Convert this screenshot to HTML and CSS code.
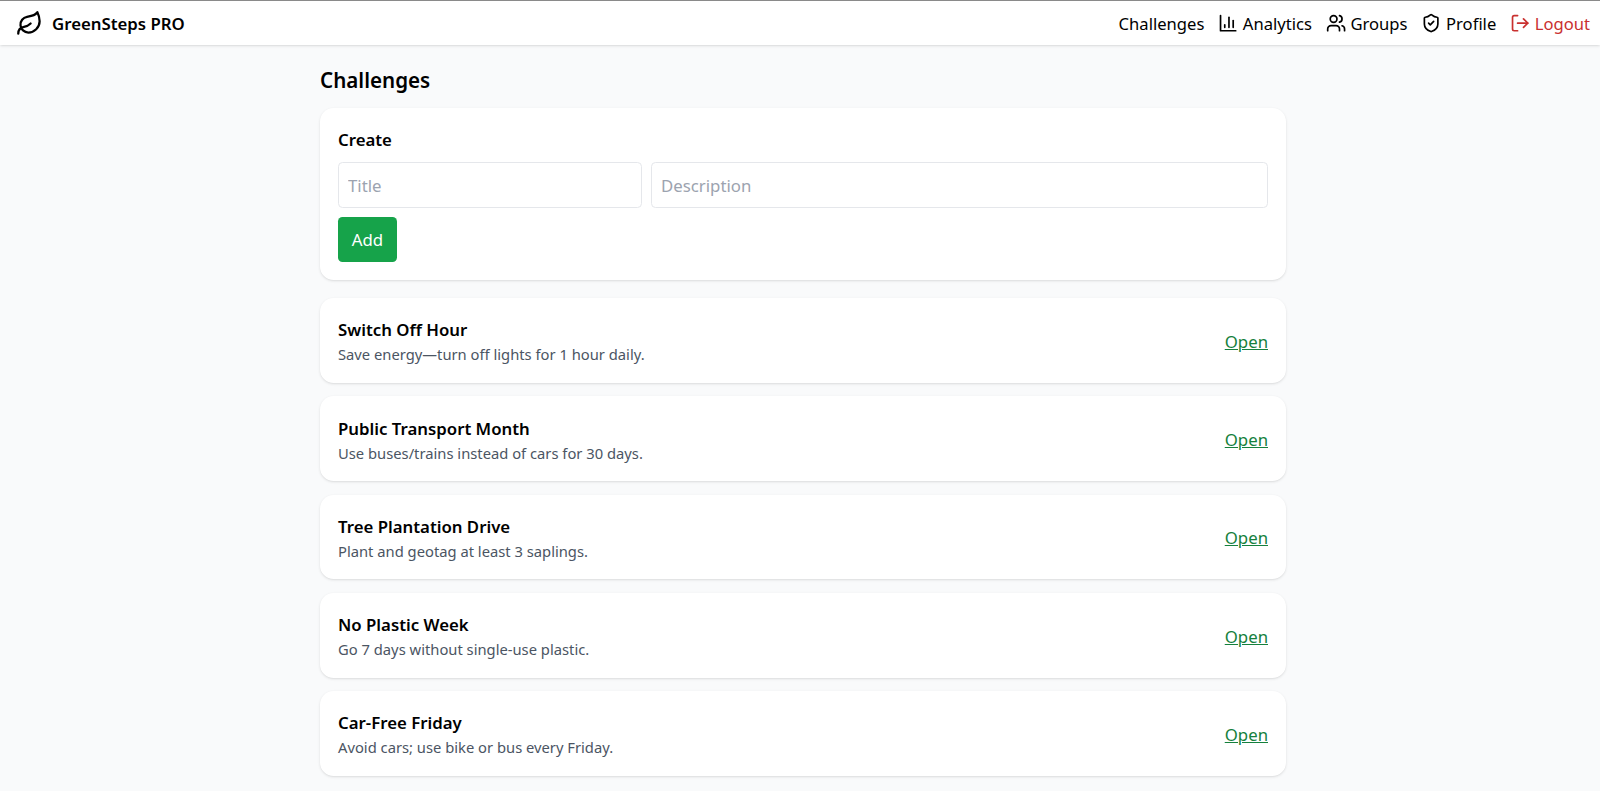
FILE: index.html
```html
<!DOCTYPE html>
<html lang="en">
<head>
    <meta charset="UTF-8">
    <meta name="viewport" content="width=device-width, initial-scale=1.0">
    <title>GreenSteps PRO</title>
    <link rel="stylesheet" href="styles.css">
</head>
<body>
    <nav class="topbar">
        <a class="brand" href="#">
            <svg class="icon brand-icon" viewBox="0 0 24 24"><path d="M11 20A7 7 0 0 1 9.8 6.1C15.5 5 17 4.48 19 2c1 2 2 4.18 2 8 0 5.5-4.78 10-10 10Z"/><path d="M2 21c0-3 1.85-5.36 5.08-6C9.5 14.52 12 13 13 12"/></svg>
            <span>GreenSteps PRO</span>
        </a>
        <div class="nav-links">
            <a href="#">Challenges</a>
            <a href="#"><svg class="icon" viewBox="0 0 24 24"><path d="M3 3v18h18"/><path d="M18 17V9"/><path d="M13 17V5"/><path d="M8 17v-3"/></svg>Analytics</a>
            <a href="#"><svg class="icon" viewBox="0 0 24 24"><path d="M16 21v-2a4 4 0 0 0-4-4H6a4 4 0 0 0-4 4v2"/><circle cx="9" cy="7" r="4"/><path d="M22 21v-2a4 4 0 0 0-3-3.87"/><path d="M16 3.13a4 4 0 0 1 0 7.75"/></svg>Groups</a>
            <a href="#"><svg class="icon" viewBox="0 0 24 24"><path d="M20 13c0 5-3.5 7.5-7.66 8.95a1 1 0 0 1-.67-.01C7.5 20.5 4 18 4 13V6a1 1 0 0 1 1-1c2 0 4.5-1.2 6.24-2.72a1.17 1.17 0 0 1 1.52 0C14.51 3.81 17 5 19 5a1 1 0 0 1 1 1z"/><path d="m9 12 2 2 4-4"/></svg>Profile</a>
            <a class="logout" href="#"><svg class="icon" viewBox="0 0 24 24"><path d="M9 21H5a2 2 0 0 1-2-2V5a2 2 0 0 1 2-2h4"/><path d="m16 17 5-5-5-5"/><path d="M21 12H9"/></svg>Logout</a>
        </div>
    </nav>

    <main class="page">
        <h1 class="page-title">Challenges</h1>

        <section class="card create">
            <h2 class="card-title">Create</h2>
            <div class="fields">
                <input class="field field-title" placeholder="Title">
                <input class="field field-desc" placeholder="Description">
            </div>
            <button class="add-btn">Add</button>
        </section>

        <section class="card row">
            <div>
                <h2 class="card-title">Switch Off Hour</h2>
                <p class="desc">Save energy—turn off lights for 1 hour daily.</p>
            </div>
            <a class="open" href="#">Open</a>
        </section>
        <section class="card row">
            <div>
                <h2 class="card-title">Public Transport Month</h2>
                <p class="desc">Use buses/trains instead of cars for 30 days.</p>
            </div>
            <a class="open" href="#">Open</a>
        </section>
        <section class="card row">
            <div>
                <h2 class="card-title">Tree Plantation Drive</h2>
                <p class="desc">Plant and geotag at least 3 saplings.</p>
            </div>
            <a class="open" href="#">Open</a>
        </section>
        <section class="card row">
            <div>
                <h2 class="card-title">No Plastic Week</h2>
                <p class="desc">Go 7 days without single-use plastic.</p>
            </div>
            <a class="open" href="#">Open</a>
        </section>
        <section class="card row">
            <div>
                <h2 class="card-title">Car-Free Friday</h2>
                <p class="desc">Avoid cars; use bike or bus every Friday.</p>
            </div>
            <a class="open" href="#">Open</a>
        </section>
    </main>
</body>
</html>
```

FILE: styles.css
```css
* {
    box-sizing: border-box;
}

html, body {
    height: 791px;
    overflow: hidden;
}

body {
    margin: 0;
    background: #f9fafb;
    color: #000;
    font-family: "Noto Sans", "Open Sans", sans-serif;
    font-size: 16.8px;
}

a {
    color: inherit;
    text-decoration: none;
}

.icon {
    width: 20.25px;
    height: 20.25px;
    fill: none;
    stroke: currentColor;
    stroke-width: 2;
    stroke-linecap: round;
    stroke-linejoin: round;
    flex: none;
}

.topbar {
    display: flex;
    align-items: center;
    justify-content: space-between;
    height: 45px;
    padding: 0 10px 0 16px;
    background: #fff;
    border-top: 1px solid #8a8a8a;
    box-shadow: 0 1px 3px rgba(0, 0, 0, .1), 0 1px 2px -1px rgba(0, 0, 0, .1);
}

.brand {
    display: flex;
    align-items: center;
    gap: 9px;
    font-weight: 600;
}

.brand-icon {
    width: 27px;
    height: 27px;
}

.nav-links {
    display: flex;
    align-items: center;
    gap: 13.75px;
    font-size: 16.6px;
}

.nav-links a {
    display: flex;
    align-items: center;
    gap: 4.5px;
}

.logout {
    color: #c9302f;
}

.page {
    width: 966px;
    margin-left: 320px;
}

.page-title {
    margin: 0;
    padding-top: 20px;
    height: 63px;
    font-size: 20.6px;
    font-weight: 600;
    line-height: 30px;
}

.card {
    margin-bottom: 13.5px;
    padding: 18px;
    background: #fff;
    border-radius: 13.5px;
    box-shadow: 0 1px 3px rgba(0, 0, 0, .1), 0 1px 2px -1px rgba(0, 0, 0, .1);
}

.create {
    margin-bottom: 18px;
}

.card-title {
    margin: 0;
    font-size: 16.8px;
    font-weight: 600;
    line-height: 27px;
}

.row .card-title {
    line-height: 26px;
}

.fields {
    display: flex;
    gap: 9px;
    margin-top: 9px;
}

.field {
    height: 46px;
    padding: 0 9px;
    border: 1px solid #e5e7eb;
    border-radius: 4.5px;
    background: #fff;
    font: inherit;
    color: inherit;
}

.field::placeholder {
    color: #9ca3af;
}

.field-title {
    width: 304px;
}

.field-desc {
    flex: 1;
}

.add-btn {
    display: block;
    width: 59px;
    height: 45px;
    margin-top: 9px;
    padding: 0;
    border: 0;
    border-radius: 4.5px;
    background: #16a34a;
    color: #fff;
    font: inherit;
}

.row {
    display: flex;
    align-items: center;
    justify-content: space-between;
    height: 84.75px;
    padding-top: 20px;
}

.desc {
    margin: 1px 0 0;
    font-size: 14.75px;
    line-height: 21px;
    color: #4b5563;
}

.open {
    color: #15803d;
    text-decoration: underline;
}
```
